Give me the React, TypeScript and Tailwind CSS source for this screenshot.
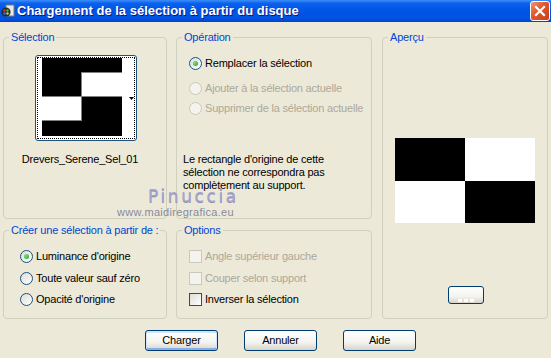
import React from "react";

function Radio({ checked = false, disabled = false }: { checked?: boolean; disabled?: boolean }) {
  return (
    <span
      className={
        disabled
          ? "flex h-[13px] w-[13px] shrink-0 items-center justify-center rounded-full border border-[#CAC8BB] bg-[#F4F3EE]"
          : "flex h-[13px] w-[13px] shrink-0 items-center justify-center rounded-full border border-[#1C5180] bg-[linear-gradient(135deg,#DCDCD7,#FFFFFF)]"
      }
    >
      {checked && <span className="h-[5px] w-[5px] rounded-full bg-[radial-gradient(circle_at_35%_35%,#7BE07B,#21A121)]" />}
    </span>
  );
}

function Check({ disabled = false }: { disabled?: boolean }) {
  return (
    <span
      className={
        disabled
          ? "h-[13px] w-[13px] shrink-0 border border-[#CAC8BB] bg-[#F4F3EE]"
          : "h-[13px] w-[13px] shrink-0 border border-[#1C5180] bg-[linear-gradient(135deg,#DCDCD7,#FFFFFF)]"
      }
    />
  );
}

function Group({ label, className, children }: { label: string; className: string; children?: React.ReactNode }) {
  return (
    <fieldset className={"rounded-[4px] border border-[#D0D0BF] " + className}>
      <legend className="ml-[5px] whitespace-nowrap px-[2px] text-[11px] leading-[13px] text-[#0046D5]">{label}</legend>
      {children}
    </fieldset>
  );
}

function XPButton({ label, focused = false }: { label: string; focused?: boolean }) {
  return (
    <button
      className={
        focused
          ? "flex h-[21px] w-[73px] items-center justify-center rounded-[3px] border border-[#003C74] bg-[linear-gradient(to_bottom,#FFFFFF,#F3F3EF_60%,#D8D4C8)] text-[11px] text-black shadow-[inset_0_1px_0_1px_#CEE7FF,inset_0_-1px_0_1px_#89ADE4]"
          : "flex h-[21px] w-[73px] items-center justify-center rounded-[3px] border border-[#003C74] bg-[linear-gradient(to_bottom,#FFFFFF,#F3F3EF_60%,#D8D4C8)] text-[11px] text-black"
      }
    >
      {label}
    </button>
  );
}

function TitleBar() {
  return (
    <div className="flex h-[22px] items-center bg-[linear-gradient(to_bottom,#3D8EF8_0%,#0A61EE_15%,#0055E5_45%,#0053E2_85%,#0042C8_100%)]">
      <svg width="14" height="14" viewBox="0 0 14 14" className="ml-[1px] shrink-0">
        <rect x="5" y="1" width="8" height="11" fill="#E8E8E8" stroke="#7A7A7A" strokeWidth="1" />
        <circle cx="5" cy="8" r="4.6" fill="#2A2A2A" />
        <circle cx="3.5" cy="6.5" r="1.2" fill="#E03030" />
        <circle cx="6.5" cy="6.5" r="1.2" fill="#30C030" />
        <circle cx="3.5" cy="9.5" r="1.2" fill="#3070F0" />
        <circle cx="6.5" cy="9.5" r="1.2" fill="#E0D030" />
      </svg>
      <span className="ml-[2px] text-[13px] font-bold leading-[22px] tracking-normal text-white [text-shadow:1px_1px_#0A1883]">
        Chargement de la sélection à partir du disque
      </span>
      <div className="ml-auto mr-[1px] flex h-[20px] w-[20px] items-center justify-center rounded-[3px] border border-white bg-[linear-gradient(135deg,#F29372,#E0552D_45%,#C8401C)]">
        <svg width="12" height="12" viewBox="0 0 12 12">
          <path d="M2 2 L10 10 M10 2 L2 10" stroke="white" strokeWidth="2.2" strokeLinecap="square" />
        </svg>
      </div>
    </div>
  );
}

export default function App() {
  return (
    <div className="relative h-[358px] w-[551px] overflow-hidden bg-[#ECE9D8] text-[11px] leading-[13px] tracking-[-0.2px] text-black [font-family:'Liberation_Sans',Arial,sans-serif]">
      <TitleBar />
      <div className="flex pl-[3px] pt-[9px]">
        <div className="flex w-[164px] flex-col gap-[5px]">
          <Group label="Sélection" className="h-[188px]">
            <div className="ml-[31px] mt-[11px] h-[86px] w-[102px] rounded-[3px] border border-[#1C5180] bg-white p-[1px]">
              <div className="flex h-full w-full border border-dotted border-black pl-[4px]">
                <svg width="80" height="78" viewBox="0 0 80 78" className="shrink-0">
                  <rect x="0" y="0" width="80" height="78" fill="#000" />
                  <rect x="39" y="14" width="41" height="24" fill="#fff" />
                  <rect x="0" y="38" width="39" height="25" fill="#fff" />
                  <path d="M39 14.5 H80 M39.5 14 V38 M0 38.5 H80 M0 62.5 H39 M39.5 38 V63" stroke="#808080" strokeWidth="1" />
                </svg>
                <svg width="5" height="3" viewBox="0 0 5 3" className="ml-[7px] self-center">
                  <path d="M0 0 H5 L2.5 3 Z" fill="#000" />
                </svg>
              </div>
            </div>
            <div className="mt-[12px] pr-[10px] text-center">Drevers_Serene_Sel_01</div>
          </Group>
          <Group label="Créer une sélection à partir de :" className="h-[95px]">
            <div className="ml-[16px] mt-[13px] flex h-[13px] items-center gap-[3px]">
              <Radio checked />
              <span>Luminance d'origine</span>
            </div>
            <div className="ml-[16px] mt-[9px] flex h-[13px] items-center gap-[3px]">
              <Radio />
              <span>Toute valeur sauf zéro</span>
            </div>
            <div className="ml-[16px] mt-[8px] flex h-[13px] items-center gap-[3px]">
              <Radio />
              <span>Opacité d'origine</span>
            </div>
          </Group>
        </div>
        <div className="ml-[9px] flex w-[196px] flex-col gap-[5px]">
          <Group label="Opération" className="h-[188px]">
            <div className="ml-[12px] mt-[13px] flex h-[13px] items-center gap-[3px]">
              <Radio checked />
              <span>Remplacer la sélection</span>
            </div>
            <div className="ml-[12px] mt-[12px] flex h-[13px] items-center gap-[3px] text-[#ACA899]">
              <Radio disabled />
              <span>Ajouter à la sélection actuelle</span>
            </div>
            <div className="ml-[12px] mt-[7px] flex h-[13px] items-center gap-[3px] text-[#ACA899]">
              <Radio disabled />
              <span>Supprimer de la sélection actuelle</span>
            </div>
            <div className="ml-[6px] mt-[38px]">
              Le rectangle d'origine de cette
              <br />
              sélection ne correspondra pas
              <br />
              complètement au support.
            </div>
          </Group>
          <Group label="Options" className="h-[95px]">
            <div className="ml-[12px] mt-[13px] flex h-[13px] items-center gap-[3px] text-[#ACA899]">
              <Check disabled />
              <span>Angle supérieur gauche</span>
            </div>
            <div className="ml-[12px] mt-[9px] flex h-[13px] items-center gap-[3px] text-[#ACA899]">
              <Check disabled />
              <span>Couper selon support</span>
            </div>
            <div className="ml-[12px] mt-[8px] flex h-[13px] items-center gap-[3px]">
              <Check />
              <span>Inverser la sélection</span>
            </div>
          </Group>
        </div>
        <div className="ml-[10px] w-[166px]">
          <Group label="Aperçu" className="h-[288px]">
            <div className="ml-[12px] mt-[94px] grid h-[85px] w-[140px] grid-cols-2 grid-rows-2">
              <div className="bg-black" />
              <div className="bg-white" />
              <div className="bg-white" />
              <div className="bg-black" />
            </div>
            <div className="ml-[65px] mt-[63px] flex h-[18px] w-[36px] items-end justify-center rounded-[3px] border border-[#003C74] bg-[linear-gradient(to_bottom,#FFFFFF,#F3F3EF_60%,#D8D4C8)] pb-[1px]">
              <div className="flex gap-[2px]">
                <div className="h-[3px] w-[4px] bg-white" />
                <div className="h-[3px] w-[4px] bg-white" />
                <div className="h-[3px] w-[4px] bg-white" />
              </div>
            </div>
          </Group>
        </div>
      </div>
      <div className="mt-[11px] flex gap-[26px] pl-[145px]">
        <XPButton label="Charger" focused />
        <XPButton label="Annuler" />
        <XPButton label="Aide" />
      </div>
      <div className="absolute left-[148px] top-[187px] text-[17px] leading-[18px] tracking-[2.6px] text-[#A6A6CE] [font-family:'DejaVu_Sans',sans-serif] [text-shadow:0_1px_#8C8CB0]">
        Pinuccia
      </div>
      <div className="absolute left-[117px] top-[206px] text-[11px] leading-[12px] tracking-[0.3px] text-[#8A8A9A]">
        www.maidiregrafica.eu
      </div>
    </div>
  );
}
